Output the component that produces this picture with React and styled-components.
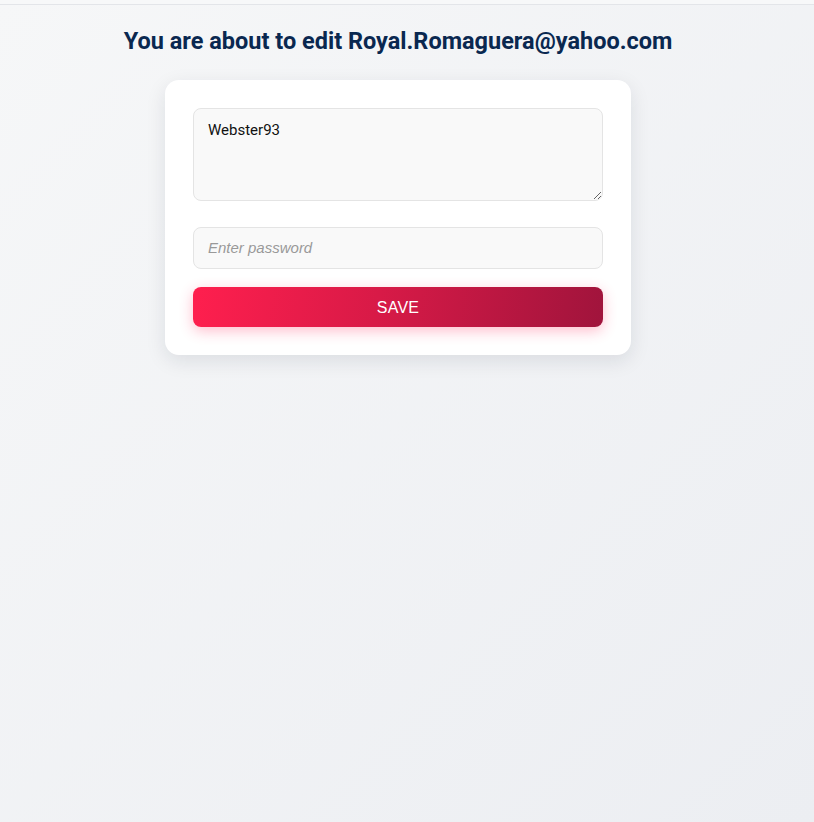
import styled, { createGlobalStyle } from "styled-components";

const GlobalStyle = createGlobalStyle`
  html, body {
    margin: 0;
    padding: 0;
    min-height: 100%;
  }
  body {
    font-family: Roboto, "Liberation Sans", sans-serif;
    background: linear-gradient(135deg, #f6f7f8 0%, #eceef2 100%);
    min-height: 822px;
  }
`;

const TopBar = styled.header`
  height: 4px;
  background: #f7f8f9;
  border-bottom: 1px solid #e3e5e9;
`;

const Main = styled.main`
  display: flex;
  flex-direction: column;
  align-items: center;
  padding: 0 18px 0 0;
`;

const Heading = styled.h2`
  margin: 22px 0 25px;
  font-size: 23.5px;
  line-height: 28px;
  font-weight: 700;
  color: #0a2850;
`;

const Card = styled.form`
  width: 466px;
  box-sizing: border-box;
  padding: 28px;
  background: #fff;
  border-radius: 14px;
  box-shadow: 0 6px 20px rgba(20, 30, 50, 0.1);
  display: flex;
  flex-direction: column;
`;

const fieldBase = `
  box-sizing: border-box;
  width: 100%;
  background: #f9f9f9;
  border: 1px solid #e4e4e4;
  border-radius: 8px;
  padding: 12px 14px;
  font-size: 15px;
  color: #111;
  outline: none;
`;

const TextArea = styled.textarea`
  ${fieldBase}
  height: 93px;
  font-family: Roboto, "Liberation Sans", sans-serif;
  resize: vertical;
  margin-bottom: 26px;
`;

const Input = styled.input`
  ${fieldBase}
  height: 42px;
  padding-bottom: 13px;
  font-family: "Liberation Sans", Arial, sans-serif;
  margin-bottom: 18px;

  &::placeholder {
    color: #999;
    font-style: italic;
  }
`;

const SaveButton = styled.button`
  height: 40px;
  padding-top: 2px;
  border: none;
  border-radius: 8px;
  background: linear-gradient(100deg, #ff1f4e 0%, #d81a47 45%, #a0143c 100%);
  box-shadow: 0 4px 14px rgba(255, 40, 90, 0.3);
  color: #fff;
  font-family: "Liberation Sans", Arial, sans-serif;
  font-size: 16px;
  letter-spacing: 0.2px;
  cursor: pointer;
`;

const App = () => {
  return (
    <>
      <GlobalStyle />
      <TopBar />
      <Main>
        <Heading>You are about to edit Royal.Romaguera@yahoo.com</Heading>
        <Card onSubmit={(e) => e.preventDefault()}>
          <TextArea defaultValue="Webster93" />
          <Input type="password" placeholder="Enter password" />
          <SaveButton type="submit">SAVE</SaveButton>
        </Card>
      </Main>
    </>
  );
};

export default App;
